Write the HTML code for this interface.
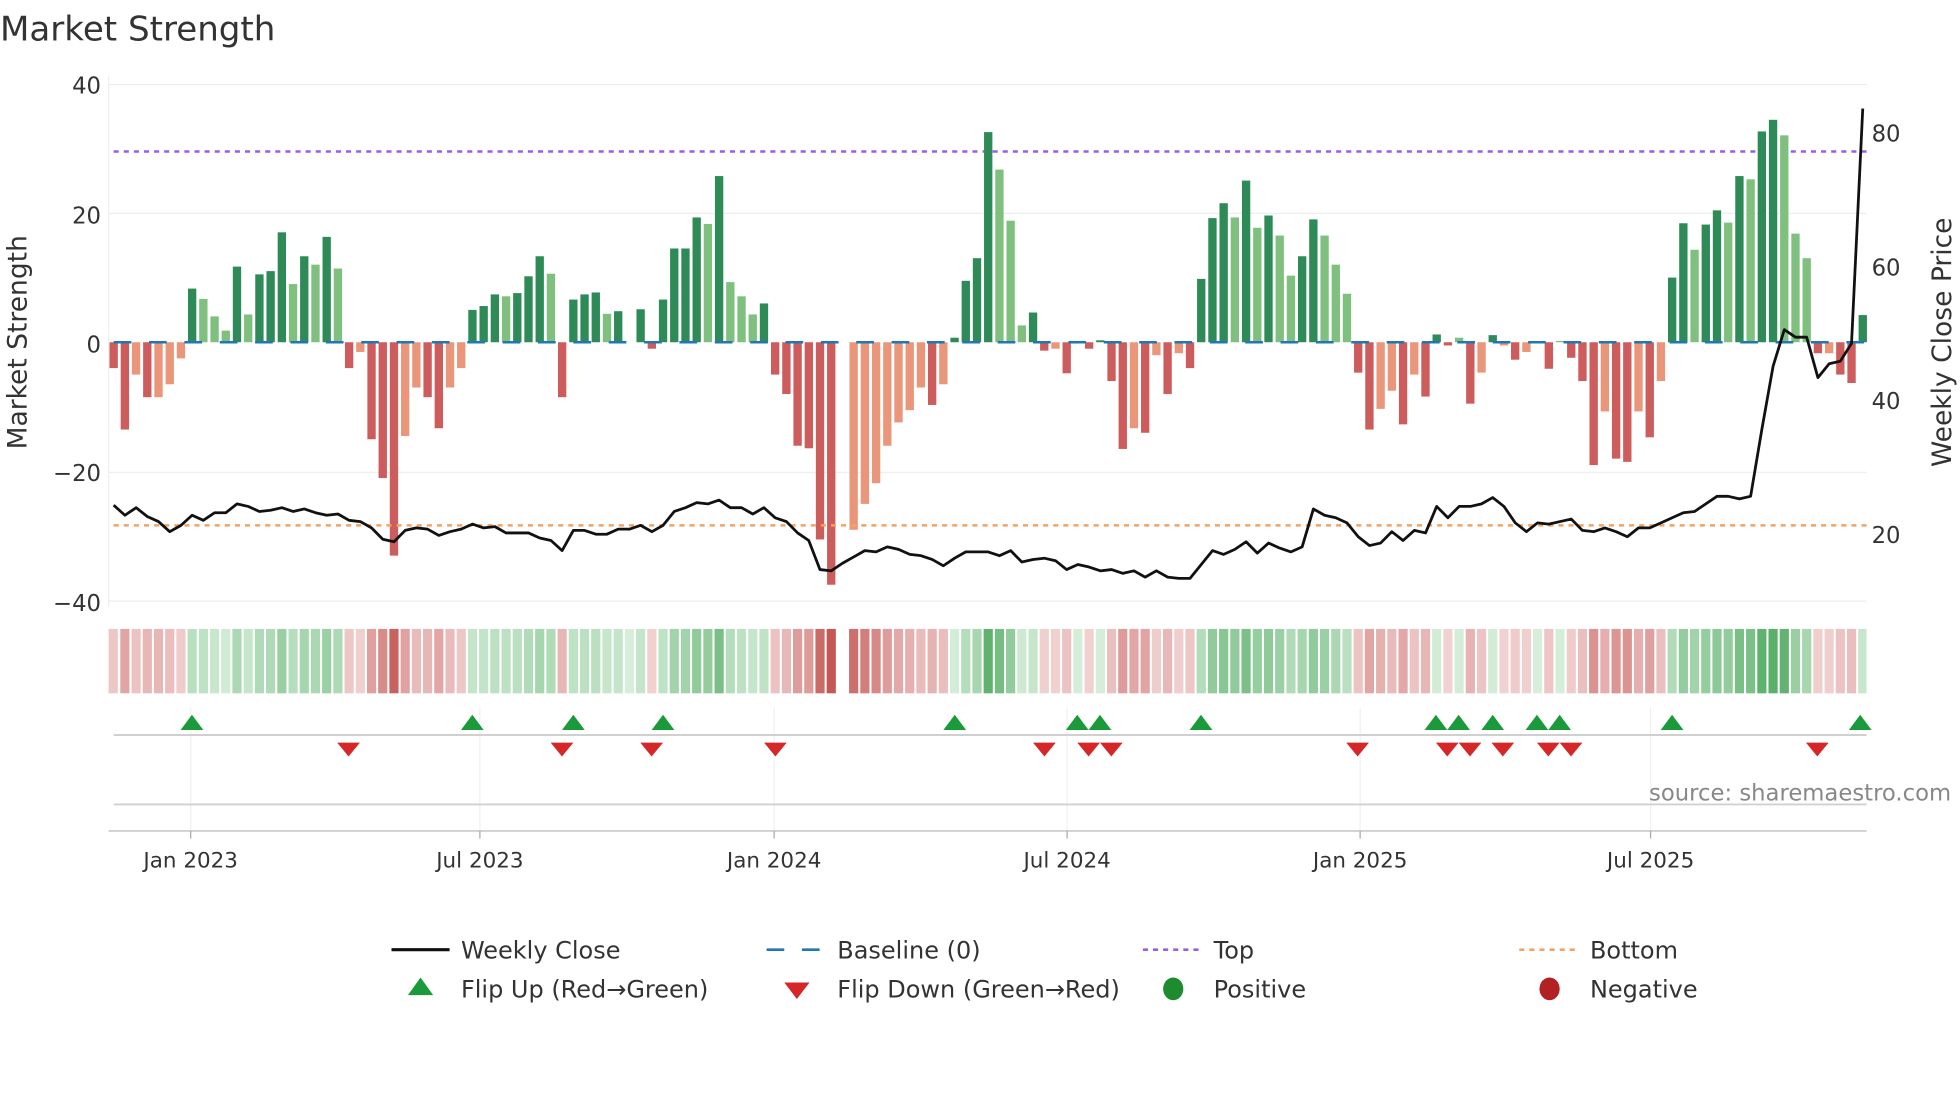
<!DOCTYPE html>
<html><head><meta charset="utf-8"><style>
html,body{margin:0;padding:0;background:#fff;width:1960px;height:1102px;overflow:hidden}
svg{display:block;font-family:"DejaVu Sans","Liberation Sans",sans-serif}
</style></head><body>
<svg id="s" width="1960" height="1102" viewBox="0 0 1552 872.6" xmlns="http://www.w3.org/2000/svg">
<text x="0" y="32" font-size="27" fill="#333">Market Strength</text>
<g stroke="#eee" stroke-width="1">
<line x1="86" x2="1478" y1="67" y2="67"/><line x1="86" x2="1478" y1="169" y2="169"/><line x1="86" x2="1478" y1="374" y2="374"/><line x1="86" x2="1478" y1="476" y2="476"/>
<line x1="86" x2="86" y1="60" y2="480"/>
</g>
<g font-size="18" fill="#333" text-anchor="end">
<text x="80" y="74">40</text><text x="80" y="177">20</text><text x="80" y="279">0</text><text x="80" y="381">−20</text><text x="80" y="484">−40</text>
</g>
<g font-size="18" fill="#333">
<text x="1482" y="112">80</text><text x="1482" y="218">60</text><text x="1482" y="324">40</text><text x="1482" y="430">20</text>
</g>
<text transform="translate(21,271) rotate(-90)" font-size="21" fill="#333" text-anchor="middle">Market Strength</text>
<text transform="translate(1545,271) rotate(-90)" font-size="21" fill="#333" text-anchor="middle">Weekly Close Price</text>
<line x1="90" x2="1478" y1="120" y2="120" stroke="#9b5de5" stroke-width="2" stroke-dasharray="4,4"/>
<g id="bars"></g>
<line x1="90" x2="1478" y1="271" y2="271" stroke="#1f77b4" stroke-width="2" stroke-dasharray="14,14"/>
<line x1="90" x2="1478" y1="416" y2="416" stroke="#f4a261" stroke-width="2" stroke-dasharray="4,4"/>
<polyline id="price" fill="none" stroke="#111" stroke-width="2.2" stroke-linejoin="round"/>
<g id="strip"></g>
<g stroke="#f0f0f0" stroke-width="1">
<line x1="151" x2="151" y1="560" y2="660"/><line x1="380" x2="380" y1="560" y2="660"/><line x1="613" x2="613" y1="560" y2="660"/><line x1="845" x2="845" y1="560" y2="660"/><line x1="1077" x2="1077" y1="560" y2="660"/><line x1="1307" x2="1307" y1="560" y2="660"/>
</g>
<line x1="90" x2="1478" y1="582" y2="582" stroke="#d0d0d0" stroke-width="1.5"/>
<line x1="90" x2="1478" y1="637" y2="637" stroke="#d0d0d0" stroke-width="1.5"/>
<line x1="86" x2="1478" y1="658" y2="658" stroke="#d0d0d0" stroke-width="1.5"/>
<g stroke="#aaa"><line x1="151" x2="151" y1="658" y2="664"/><line x1="380" x2="380" y1="658" y2="664"/><line x1="613" x2="613" y1="658" y2="664"/><line x1="845" x2="845" y1="658" y2="664"/><line x1="1077" x2="1077" y1="658" y2="664"/><line x1="1307" x2="1307" y1="658" y2="664"/></g>
<g id="flips"></g>
<text x="1545" y="634" font-size="18" fill="#888" text-anchor="end">source: sharemaestro.com</text>
<g font-size="17" fill="#333" text-anchor="middle">
<text x="151" y="687">Jan 2023</text><text x="380" y="687">Jul 2023</text><text x="613" y="687">Jan 2024</text><text x="845" y="687">Jul 2024</text><text x="1077" y="687">Jan 2025</text><text x="1307" y="687">Jul 2025</text>
</g>
<g font-size="19" fill="#333">
<line x1="310" x2="356" y1="752" y2="752" stroke="#111" stroke-width="2.5"/><text x="365" y="759">Weekly Close</text>
<line x1="607" x2="653" y1="752" y2="752" stroke="#1f77b4" stroke-width="2" stroke-dasharray="14,14"/><text x="663" y="759">Baseline (0)</text>
<line x1="905" x2="951" y1="752" y2="752" stroke="#9b5de5" stroke-width="2" stroke-dasharray="4,4"/><text x="961" y="759">Top</text>
<line x1="1203" x2="1249" y1="752" y2="752" stroke="#f4a261" stroke-width="2" stroke-dasharray="4,4"/><text x="1259" y="759">Bottom</text>
<polygon points="323,788 343,788 333,774" fill="#1a9a3a"/><text x="365" y="790">Flip Up (Red→Green)</text>
<polygon points="621,778 641,778 631,791" fill="#d62728"/><text x="663" y="790">Flip Down (Green→Red)</text>
<ellipse cx="929" cy="783" rx="8" ry="9" fill="#1e8c2e"/><text x="961" y="790">Positive</text>
<ellipse cx="1227" cy="783" rx="8" ry="9" fill="#b22222"/><text x="1259" y="790">Negative</text>
</g>
</svg>
<script>
var D=[[-4,'r'],[-13.5,'r'],[-5,'s'],[-8.5,'r'],[-8.5,'s'],[-6.5,'s'],[-2.5,'s'],[8.3,'g'],[6.7,'l'],[4,'l'],[1.8,'l'],[11.7,'g'],[4.3,'l'],[10.5,'g'],[11,'g'],[17,'g'],[9,'l'],[13.3,'g'],[12,'l'],[16.3,'g'],[11.4,'l'],[-4,'r'],[-1.5,'s'],[-15,'r'],[-21,'r'],[-33,'r'],[-14.5,'s'],[-7,'s'],[-8.5,'r'],[-13.3,'r'],[-7,'s'],[-4,'s'],[5,'g'],[5.6,'g'],[7.4,'g'],[7.1,'l'],[7.6,'g'],[10.2,'g'],[13.3,'g'],[10.6,'l'],[-8.5,'r'],[6.6,'g'],[7.4,'g'],[7.7,'g'],[4.4,'l'],[4.8,'g'],[0,'l'],[5.1,'g'],[-1,'r'],[6.6,'g'],[14.5,'g'],[14.5,'g'],[19.3,'g'],[18.3,'l'],[25.7,'g'],[9.3,'l'],[7.1,'l'],[4.3,'l'],[6,'g'],[-5,'r'],[-8,'r'],[-16,'r'],[-16.4,'r'],[-30.5,'r'],[-37.5,'r'],[0,'z'],[-29,'s'],[-25,'s'],[-21.8,'s'],[-16,'s'],[-12.4,'s'],[-10.5,'s'],[-7,'s'],[-9.7,'r'],[-6.5,'s'],[0.7,'g'],[9.5,'g'],[13,'g'],[32.5,'g'],[26.7,'l'],[18.8,'l'],[2.6,'l'],[4.6,'g'],[-1.3,'r'],[-1,'s'],[-4.8,'r'],[0.2,'g'],[-1,'r'],[0.3,'g'],[-6,'r'],[-16.5,'r'],[-13.3,'s'],[-14,'r'],[-2,'s'],[-8,'r'],[-1.7,'s'],[-4,'r'],[9.8,'g'],[19.2,'g'],[21.5,'g'],[19.3,'l'],[25,'g'],[17.7,'l'],[19.6,'g'],[16.5,'l'],[10.3,'l'],[13.3,'g'],[19,'g'],[16.5,'l'],[12,'l'],[7.5,'l'],[-4.7,'r'],[-13.5,'r'],[-10.3,'s'],[-7.5,'s'],[-12.7,'r'],[-5,'s'],[-8.4,'r'],[1.2,'g'],[-0.5,'r'],[0.7,'l'],[-9.5,'r'],[-4.7,'s'],[1.1,'g'],[-0.5,'s'],[-2.7,'r'],[-1.5,'s'],[0,'l'],[-4.1,'r'],[0.2,'l'],[-2.4,'r'],[-6,'r'],[-19,'r'],[-10.7,'s'],[-18,'r'],[-18.5,'r'],[-10.7,'s'],[-14.7,'r'],[-6,'s'],[10,'g'],[18.4,'g'],[14.3,'l'],[18.2,'g'],[20.4,'g'],[18.5,'l'],[25.7,'g'],[25.2,'l'],[32.6,'g'],[34.4,'g'],[32,'l'],[16.8,'l'],[13,'l'],[-1.7,'r'],[-1.7,'s'],[-5,'r'],[-6.3,'r'],[4.2,'g']];
var P=[400,408,402,409,413,421,416,408,412,406,406,399,401,405,404,402,405,403,406,408,407,412,413,418,427,429,420,418,419,424,421,419,415,418,417,422,422,422,426,428,436,420,420,423,423,419,419,416,421,416,405,402,398,399,396,402,402,407,402,410,413,422,428,451,452,446,441,436,437,433,435,439,440,443,448,442,437,437,437,440,436,445,443,442,444,451,447,449,452,451,454,452,457,452,457,458,458,447,436,439,435,429,438,430,434,437,433,403,408,410,414,425,432,430,421,428,420,422,401,410,401,401,399,394,401,414,421,414,415,413,411,420,421,418,421,425,418,418,414,410,406,405,399,393,393,395,393,340,290,261,267,267,299,288,286,272,86];
var C={g:'#2e8b57',l:'#7fc07f',r:'#cd5c5c',s:'#e9967a',z:'none'};
var NS='http://www.w3.org/2000/svg',dx=(1475-90)/(D.length-1);
function el(t,a,p){var e=document.createElementNS(NS,t);for(var k in a)e.setAttribute(k,a[k]);document.getElementById(p).appendChild(e);return e;}
function mix(a,b,t){var r='#';for(var i=0;i<3;i++){var v=Math.round(a[i]+(b[i]-a[i])*t);r+=('0'+v.toString(16)).slice(-2);}return r;}
var pts=[];
for(var i=0;i<D.length;i++){var x=90+i*dx,v=D[i][0],c=D[i][1];
 var y0=271,y1=271-v*5.12;
 if(c!='z'&&v!=0)el('rect',{x:x-3.3,y:Math.min(y0,y1),width:6.6,height:Math.abs(y1-y0),fill:C[c]},'bars');
 var t=Math.min(1,Math.abs(v)/36),col;
 if(c=='z')col='#fff';else if(v>0||c=='g'||c=='l')col=mix([214,238,218],[84,172,100],t);else col=mix([242,212,212],[196,88,84],t);
 var x0=i==0?86:x-dx/2+0.8,w=i==D.length-1?1478-x0:dx-1.6;
 el('rect',{x:x0,y:498,width:w,height:51,fill:col},'strip');
 pts.push(x.toFixed(1)+','+P[i]);}
document.getElementById('price').setAttribute('points',pts.join(' '));
[152,374,454,525,756,853,871,951,1137,1155,1182,1217,1235,1324,1473].forEach(function(x){el('polygon',{points:(x-9)+',578 '+(x+9)+',578 '+x+',566',fill:'#1a9a3a'},'flips');});
[276,445,516,614,827,862,880,1075,1146,1164,1190,1226,1244,1439].forEach(function(x){el('polygon',{points:(x-9)+',588 '+(x+9)+',588 '+x+',599',fill:'#d62728'},'flips');});
</script>
</body></html>
